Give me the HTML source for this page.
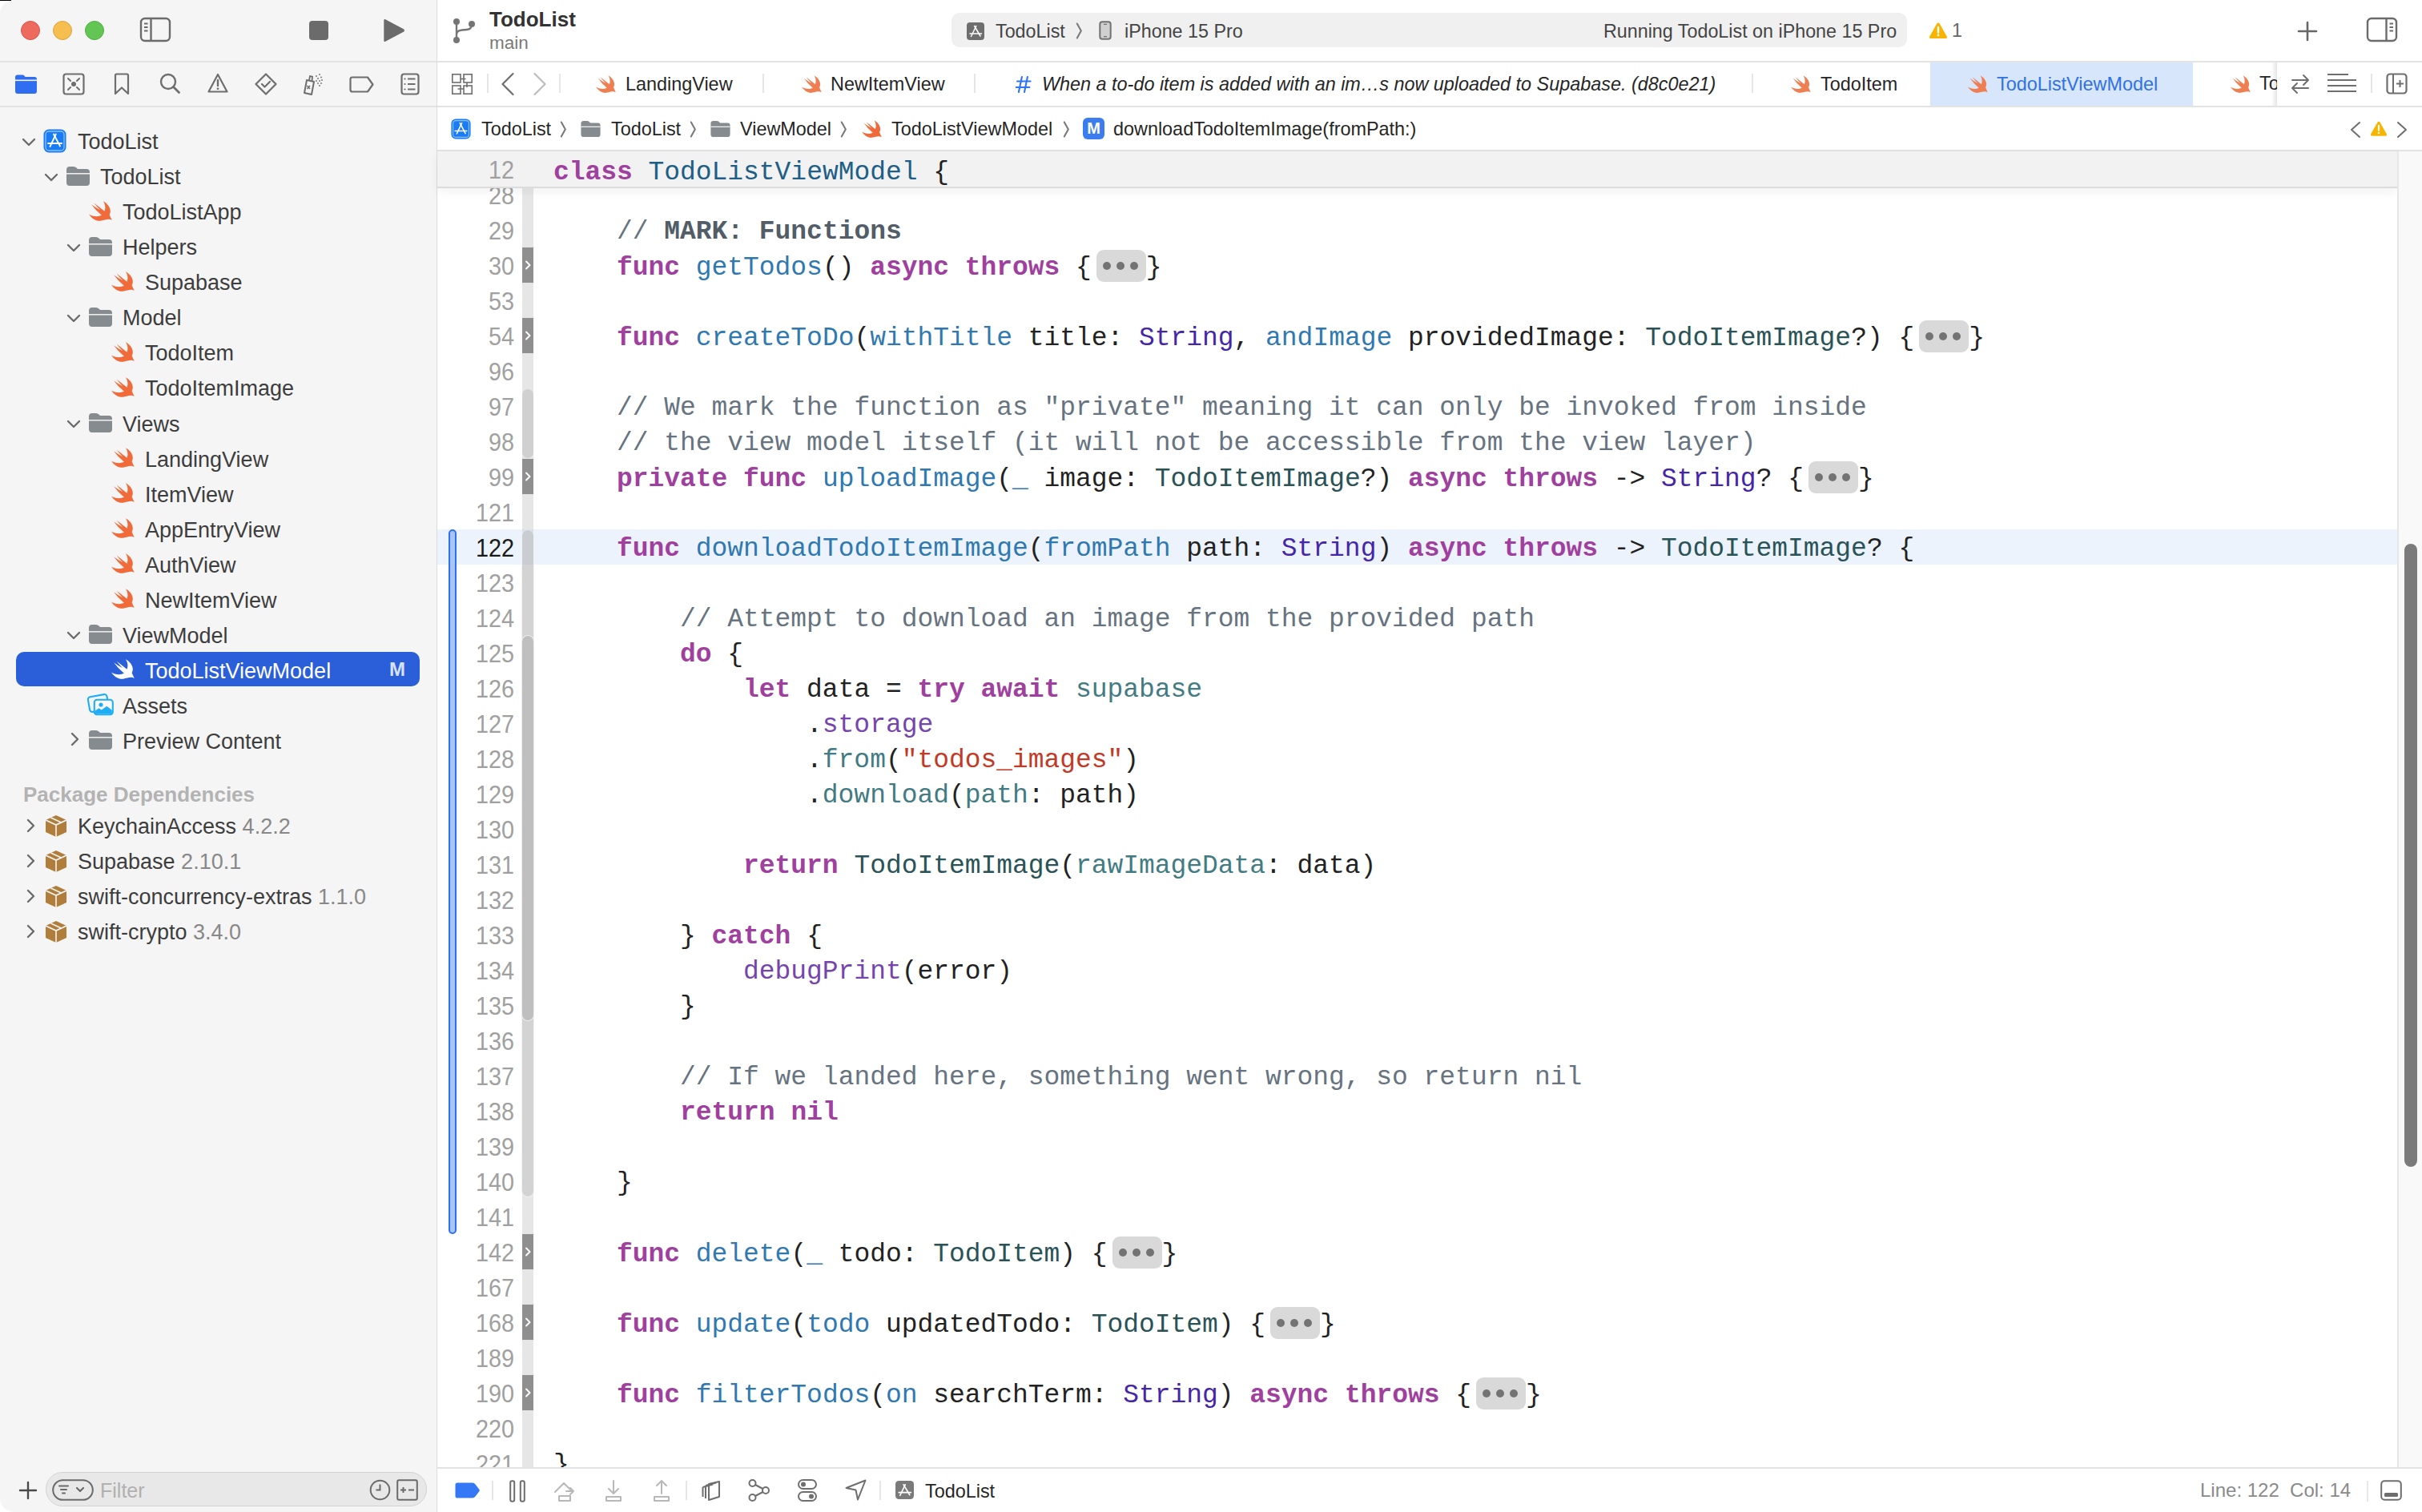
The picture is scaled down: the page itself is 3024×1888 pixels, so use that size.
<!DOCTYPE html><html><head><meta charset="utf-8"><style>
html,body{margin:0;padding:0;background:#fff;}
body{width:3024px;height:1888px;overflow:hidden;position:relative;}
#win{position:absolute;left:0;top:0;width:3024px;height:1888px;border-radius:17px;overflow:hidden;background:#fff;}
.a{position:absolute;}
</style></head><body><div id="win">
<div class="a" style="left:0;top:0;width:545px;height:1888px;background:#f5f5f5;"></div>
<div class="a" style="left:545px;top:0;width:1px;height:1888px;background:#dcdcdc;"></div>
<div class="a" style="left:0;top:76px;width:3024px;height:2px;background:#e3e3e3;"></div>
<div class="a" style="left:0;top:132px;width:545px;height:2px;background:#e3e3e3;"></div>
<div class="a" style="left:26px;top:26px;width:22px;height:22px;border-radius:50%;background:#ee6a5f;border:1px solid #d9534a;"></div>
<div class="a" style="left:66px;top:26px;width:22px;height:22px;border-radius:50%;background:#f5be4f;border:1px solid #dca23c;"></div>
<div class="a" style="left:106px;top:26px;width:22px;height:22px;border-radius:50%;background:#62c554;border:1px solid #4fae43;"></div>
<svg class="a" style="left:174px;top:21px" width="40" height="32" viewBox="0 0 40 32"><rect x="2" y="2" width="36" height="28" rx="5" fill="none" stroke="#6b6b6b" stroke-width="2.4"/><path d="M14.5 2 V30" stroke="#6b6b6b" stroke-width="2.4"/><path d="M6 8.5 H10.5 M6 13 H10.5 M6 17.5 H10.5" stroke="#6b6b6b" stroke-width="1.8"/></svg>
<div class="a" style="left:386px;top:26px;width:24px;height:24px;border-radius:4px;background:#6b6b6b;"></div>
<svg class="a" style="left:477px;top:22px" width="30" height="32" viewBox="0 0 30 32"><path d="M2.3 3.4 Q2.3 1.2 4.3 2.2 L27.3 14.6 Q28.8 16 27.3 17.4 L4.3 29.8 Q2.3 30.8 2.3 28.6 Z" fill="#6b6b6b"/></svg>
<svg class="a" style="left:19px;top:93px" width="27" height="24" viewBox="0 0 27 24"><path fill="#2f6ef0" d="M0 3.5 Q0 0.5 3 0.5 H9 Q10.5 0.5 11.5 1.8 L12.5 3 H24 Q27 3 27 6 V21 Q27 24 24 24 H3 Q0 24 0 21 Z"/><rect x="0" y="6.5" width="27" height="1.6" fill="#f5f5f5"/></svg>
<svg class="a" style="left:78px;top:91px" width="28" height="28" viewBox="0 0 28 28"><rect x="1.5" y="1.5" width="25" height="25" rx="3" fill="none" stroke="#6e6e6e" stroke-width="2.2"/><circle cx="14" cy="14" r="3" fill="#6e6e6e"/><path d="M7 7 L10 10 M21 7 L18 10 M7 21 L10 18 M21 21 L18 18" stroke="#6e6e6e" stroke-width="2" stroke-linecap="round"/></svg>
<svg class="a" style="left:142px;top:91px" width="20" height="28" viewBox="0 0 20 28"><path d="M2 3 Q2 1.5 3.5 1.5 H16.5 Q18 1.5 18 3 V26 L10 18.5 L2 26 Z" fill="none" stroke="#6e6e6e" stroke-width="2.2" stroke-linejoin="round"/></svg>
<svg class="a" style="left:199px;top:91px" width="27" height="27" viewBox="0 0 27 27"><circle cx="11" cy="11" r="9" fill="none" stroke="#6e6e6e" stroke-width="2.4"/><path d="M17.5 17.5 L24.5 24.5" stroke="#6e6e6e" stroke-width="2.8" stroke-linecap="round"/></svg>
<svg class="a" style="left:259px;top:91px" width="26" height="26" viewBox="0 0 26 26"><path d="M13 2 L24.5 23.5 H1.5 Z" fill="none" stroke="#6e6e6e" stroke-width="2.2" stroke-linejoin="round"/><path d="M13 9 V16" stroke="#6e6e6e" stroke-width="2.4" stroke-linecap="round"/><circle cx="13" cy="19.8" r="1.4" fill="#6e6e6e"/></svg>
<svg class="a" style="left:318px;top:91px" width="28" height="28" viewBox="0 0 28 28"><path d="M14 1.5 L26.5 14 L14 26.5 L1.5 14 Z" fill="none" stroke="#6e6e6e" stroke-width="2.2" stroke-linejoin="round"/><path d="M9 14 L12.5 17.5 L19 11" fill="none" stroke="#6e6e6e" stroke-width="2.2" stroke-linecap="round" stroke-linejoin="round"/></svg>
<svg class="a" style="left:377px;top:91px" width="31" height="28" viewBox="0 0 31 28"><path d="M6 9 L15 11 L12 27 L3 25 Z" fill="none" stroke="#6e6e6e" stroke-width="2" stroke-linejoin="round"/><path d="M9 9.5 L10 4 L13 4.7 L12.5 10.3" fill="none" stroke="#6e6e6e" stroke-width="1.8"/><path d="M6.5 16 L10 20 M10 16 L6.5 20" stroke="#6e6e6e" stroke-width="1.6"/><g fill="#6e6e6e"><circle cx="18" cy="4" r="0.9"/><circle cx="22" cy="2" r="0.9"/><circle cx="20" cy="7" r="0.9"/><circle cx="24" cy="5.5" r="0.9"/><circle cx="18" cy="10" r="0.9"/><circle cx="22" cy="10" r="0.9"/><circle cx="25" cy="9" r="0.9"/><circle cx="20" cy="13" r="0.9"/><circle cx="24" cy="13" r="0.9"/><circle cx="22" cy="16" r="0.9"/></g></svg>
<svg class="a" style="left:436px;top:95px" width="31" height="21" viewBox="0 0 31 21"><path d="M4 1.5 H23 L29.5 10.5 L23 19.5 H4 Q1.5 19.5 1.5 17 V4 Q1.5 1.5 4 1.5 Z" fill="none" stroke="#6e6e6e" stroke-width="2.2" stroke-linejoin="round"/></svg>
<svg class="a" style="left:500px;top:91px" width="24" height="28" viewBox="0 0 24 28"><rect x="1.5" y="1.5" width="21" height="25" rx="3" fill="none" stroke="#6e6e6e" stroke-width="2.2"/><path d="M9 7.5 H18.5 M9 14 H18.5 M9 20.5 H18.5" stroke="#6e6e6e" stroke-width="2"/><circle cx="5.5" cy="7.5" r="1.1" fill="#6e6e6e"/><circle cx="5.5" cy="14" r="1.1" fill="#6e6e6e"/><circle cx="5.5" cy="20.5" r="1.1" fill="#6e6e6e"/></svg>
<svg style="position:absolute;left:27px;top:171px" width="18" height="13" viewBox="-9 -6.5 18 13"><path d="M-7 -3.5 L0 3.5 L7 -3.5" fill="none" stroke="#6b6b6b" stroke-width="2.4" stroke-linecap="round" stroke-linejoin="round"/></svg>
<svg style="position:absolute;left:54px;top:161px" width="29" height="30" viewBox="0 0 29 30"><rect x="0.5" y="0.5" width="28" height="29" rx="6.5" fill="#1a7cf5"/><rect x="3" y="3" width="23" height="24" rx="4" fill="none" stroke="#8cc0ff" stroke-width="1.3"/><g stroke="#fff" stroke-width="1.8" stroke-linecap="round" fill="none"><path d="M15.8 6.5 L8.5 22"/><path d="M13 6.5 L21 21.5"/><path d="M6 18 L23 18"/></g></svg>
<div style="position:absolute;left:97px;top:160.4px;font:normal normal 27px/35.1px 'Liberation Sans', sans-serif;color:#3d3d3d;white-space:pre;">TodoList</div>
<svg style="position:absolute;left:55px;top:215px" width="18" height="13" viewBox="-9 -6.5 18 13"><path d="M-7 -3.5 L0 3.5 L7 -3.5" fill="none" stroke="#6b6b6b" stroke-width="2.4" stroke-linecap="round" stroke-linejoin="round"/></svg>
<svg style="position:absolute;left:83px;top:208px" width="29" height="24" viewBox="0 0 29 24"><path fill="#868b90" d="M0 4 Q0 0 4 0 H9 Q11 0 12.5 1.5 L14 3 H25 Q29 3 29 7 V20 Q29 24 25 24 H4 Q0 24 0 20 Z"/><rect x="0" y="8" width="29" height="1.6" fill="#f5f5f5" opacity="0.9"/></svg>
<div style="position:absolute;left:125px;top:204.4px;font:normal normal 27px/35.1px 'Liberation Sans', sans-serif;color:#3d3d3d;white-space:pre;">TodoList</div>
<svg style="position:absolute;left:111px;top:251px" width="29" height="25" viewBox="0 0 28.5 25.2" preserveAspectRatio="none"><path fill="#f06a3a" d="M17.5 0.3 C23 3.2 27.2 9 26.2 14.4 L25.2 17.4 L28.2 24.3 C24.5 21.8 20.5 23.6 14.5 25 C8.5 25.6 3.2 21.5 0 16.6 C4.5 19.6 11 20.4 15.6 18 Q8 11.5 3.05 4.3 Q8.5 8.5 13.9 11.4 Q9.5 7 6.5 2.6 Q13 8 19.2 12.8 C20.8 8.8 20.2 4 17.5 0.3 Z"/></svg>
<div style="position:absolute;left:153px;top:248.4px;font:normal normal 27px/35.1px 'Liberation Sans', sans-serif;color:#3d3d3d;white-space:pre;">TodoListApp</div>
<svg style="position:absolute;left:83px;top:303px" width="18" height="13" viewBox="-9 -6.5 18 13"><path d="M-7 -3.5 L0 3.5 L7 -3.5" fill="none" stroke="#6b6b6b" stroke-width="2.4" stroke-linecap="round" stroke-linejoin="round"/></svg>
<svg style="position:absolute;left:111px;top:296px" width="29" height="24" viewBox="0 0 29 24"><path fill="#868b90" d="M0 4 Q0 0 4 0 H9 Q11 0 12.5 1.5 L14 3 H25 Q29 3 29 7 V20 Q29 24 25 24 H4 Q0 24 0 20 Z"/><rect x="0" y="8" width="29" height="1.6" fill="#f5f5f5" opacity="0.9"/></svg>
<div style="position:absolute;left:153px;top:292.4px;font:normal normal 27px/35.1px 'Liberation Sans', sans-serif;color:#3d3d3d;white-space:pre;">Helpers</div>
<svg style="position:absolute;left:139px;top:339px" width="29" height="25" viewBox="0 0 28.5 25.2" preserveAspectRatio="none"><path fill="#f06a3a" d="M17.5 0.3 C23 3.2 27.2 9 26.2 14.4 L25.2 17.4 L28.2 24.3 C24.5 21.8 20.5 23.6 14.5 25 C8.5 25.6 3.2 21.5 0 16.6 C4.5 19.6 11 20.4 15.6 18 Q8 11.5 3.05 4.3 Q8.5 8.5 13.9 11.4 Q9.5 7 6.5 2.6 Q13 8 19.2 12.8 C20.8 8.8 20.2 4 17.5 0.3 Z"/></svg>
<div style="position:absolute;left:181px;top:336.4px;font:normal normal 27px/35.1px 'Liberation Sans', sans-serif;color:#3d3d3d;white-space:pre;">Supabase</div>
<svg style="position:absolute;left:83px;top:391px" width="18" height="13" viewBox="-9 -6.5 18 13"><path d="M-7 -3.5 L0 3.5 L7 -3.5" fill="none" stroke="#6b6b6b" stroke-width="2.4" stroke-linecap="round" stroke-linejoin="round"/></svg>
<svg style="position:absolute;left:111px;top:384px" width="29" height="24" viewBox="0 0 29 24"><path fill="#868b90" d="M0 4 Q0 0 4 0 H9 Q11 0 12.5 1.5 L14 3 H25 Q29 3 29 7 V20 Q29 24 25 24 H4 Q0 24 0 20 Z"/><rect x="0" y="8" width="29" height="1.6" fill="#f5f5f5" opacity="0.9"/></svg>
<div style="position:absolute;left:153px;top:380.4px;font:normal normal 27px/35.1px 'Liberation Sans', sans-serif;color:#3d3d3d;white-space:pre;">Model</div>
<svg style="position:absolute;left:139px;top:427px" width="29" height="25" viewBox="0 0 28.5 25.2" preserveAspectRatio="none"><path fill="#f06a3a" d="M17.5 0.3 C23 3.2 27.2 9 26.2 14.4 L25.2 17.4 L28.2 24.3 C24.5 21.8 20.5 23.6 14.5 25 C8.5 25.6 3.2 21.5 0 16.6 C4.5 19.6 11 20.4 15.6 18 Q8 11.5 3.05 4.3 Q8.5 8.5 13.9 11.4 Q9.5 7 6.5 2.6 Q13 8 19.2 12.8 C20.8 8.8 20.2 4 17.5 0.3 Z"/></svg>
<div style="position:absolute;left:181px;top:424.4px;font:normal normal 27px/35.1px 'Liberation Sans', sans-serif;color:#3d3d3d;white-space:pre;">TodoItem</div>
<svg style="position:absolute;left:139px;top:471px" width="29" height="25" viewBox="0 0 28.5 25.2" preserveAspectRatio="none"><path fill="#f06a3a" d="M17.5 0.3 C23 3.2 27.2 9 26.2 14.4 L25.2 17.4 L28.2 24.3 C24.5 21.8 20.5 23.6 14.5 25 C8.5 25.6 3.2 21.5 0 16.6 C4.5 19.6 11 20.4 15.6 18 Q8 11.5 3.05 4.3 Q8.5 8.5 13.9 11.4 Q9.5 7 6.5 2.6 Q13 8 19.2 12.8 C20.8 8.8 20.2 4 17.5 0.3 Z"/></svg>
<div style="position:absolute;left:181px;top:468.4px;font:normal normal 27px/35.1px 'Liberation Sans', sans-serif;color:#3d3d3d;white-space:pre;">TodoItemImage</div>
<svg style="position:absolute;left:83px;top:523px" width="18" height="13" viewBox="-9 -6.5 18 13"><path d="M-7 -3.5 L0 3.5 L7 -3.5" fill="none" stroke="#6b6b6b" stroke-width="2.4" stroke-linecap="round" stroke-linejoin="round"/></svg>
<svg style="position:absolute;left:111px;top:516px" width="29" height="24" viewBox="0 0 29 24"><path fill="#868b90" d="M0 4 Q0 0 4 0 H9 Q11 0 12.5 1.5 L14 3 H25 Q29 3 29 7 V20 Q29 24 25 24 H4 Q0 24 0 20 Z"/><rect x="0" y="8" width="29" height="1.6" fill="#f5f5f5" opacity="0.9"/></svg>
<div style="position:absolute;left:153px;top:512.5px;font:normal normal 27px/35.1px 'Liberation Sans', sans-serif;color:#3d3d3d;white-space:pre;">Views</div>
<svg style="position:absolute;left:139px;top:559px" width="29" height="25" viewBox="0 0 28.5 25.2" preserveAspectRatio="none"><path fill="#f06a3a" d="M17.5 0.3 C23 3.2 27.2 9 26.2 14.4 L25.2 17.4 L28.2 24.3 C24.5 21.8 20.5 23.6 14.5 25 C8.5 25.6 3.2 21.5 0 16.6 C4.5 19.6 11 20.4 15.6 18 Q8 11.5 3.05 4.3 Q8.5 8.5 13.9 11.4 Q9.5 7 6.5 2.6 Q13 8 19.2 12.8 C20.8 8.8 20.2 4 17.5 0.3 Z"/></svg>
<div style="position:absolute;left:181px;top:556.5px;font:normal normal 27px/35.1px 'Liberation Sans', sans-serif;color:#3d3d3d;white-space:pre;">LandingView</div>
<svg style="position:absolute;left:139px;top:603px" width="29" height="25" viewBox="0 0 28.5 25.2" preserveAspectRatio="none"><path fill="#f06a3a" d="M17.5 0.3 C23 3.2 27.2 9 26.2 14.4 L25.2 17.4 L28.2 24.3 C24.5 21.8 20.5 23.6 14.5 25 C8.5 25.6 3.2 21.5 0 16.6 C4.5 19.6 11 20.4 15.6 18 Q8 11.5 3.05 4.3 Q8.5 8.5 13.9 11.4 Q9.5 7 6.5 2.6 Q13 8 19.2 12.8 C20.8 8.8 20.2 4 17.5 0.3 Z"/></svg>
<div style="position:absolute;left:181px;top:600.5px;font:normal normal 27px/35.1px 'Liberation Sans', sans-serif;color:#3d3d3d;white-space:pre;">ItemView</div>
<svg style="position:absolute;left:139px;top:647px" width="29" height="25" viewBox="0 0 28.5 25.2" preserveAspectRatio="none"><path fill="#f06a3a" d="M17.5 0.3 C23 3.2 27.2 9 26.2 14.4 L25.2 17.4 L28.2 24.3 C24.5 21.8 20.5 23.6 14.5 25 C8.5 25.6 3.2 21.5 0 16.6 C4.5 19.6 11 20.4 15.6 18 Q8 11.5 3.05 4.3 Q8.5 8.5 13.9 11.4 Q9.5 7 6.5 2.6 Q13 8 19.2 12.8 C20.8 8.8 20.2 4 17.5 0.3 Z"/></svg>
<div style="position:absolute;left:181px;top:644.5px;font:normal normal 27px/35.1px 'Liberation Sans', sans-serif;color:#3d3d3d;white-space:pre;">AppEntryView</div>
<svg style="position:absolute;left:139px;top:691px" width="29" height="25" viewBox="0 0 28.5 25.2" preserveAspectRatio="none"><path fill="#f06a3a" d="M17.5 0.3 C23 3.2 27.2 9 26.2 14.4 L25.2 17.4 L28.2 24.3 C24.5 21.8 20.5 23.6 14.5 25 C8.5 25.6 3.2 21.5 0 16.6 C4.5 19.6 11 20.4 15.6 18 Q8 11.5 3.05 4.3 Q8.5 8.5 13.9 11.4 Q9.5 7 6.5 2.6 Q13 8 19.2 12.8 C20.8 8.8 20.2 4 17.5 0.3 Z"/></svg>
<div style="position:absolute;left:181px;top:688.5px;font:normal normal 27px/35.1px 'Liberation Sans', sans-serif;color:#3d3d3d;white-space:pre;">AuthView</div>
<svg style="position:absolute;left:139px;top:735px" width="29" height="25" viewBox="0 0 28.5 25.2" preserveAspectRatio="none"><path fill="#f06a3a" d="M17.5 0.3 C23 3.2 27.2 9 26.2 14.4 L25.2 17.4 L28.2 24.3 C24.5 21.8 20.5 23.6 14.5 25 C8.5 25.6 3.2 21.5 0 16.6 C4.5 19.6 11 20.4 15.6 18 Q8 11.5 3.05 4.3 Q8.5 8.5 13.9 11.4 Q9.5 7 6.5 2.6 Q13 8 19.2 12.8 C20.8 8.8 20.2 4 17.5 0.3 Z"/></svg>
<div style="position:absolute;left:181px;top:732.5px;font:normal normal 27px/35.1px 'Liberation Sans', sans-serif;color:#3d3d3d;white-space:pre;">NewItemView</div>
<svg style="position:absolute;left:83px;top:787px" width="18" height="13" viewBox="-9 -6.5 18 13"><path d="M-7 -3.5 L0 3.5 L7 -3.5" fill="none" stroke="#6b6b6b" stroke-width="2.4" stroke-linecap="round" stroke-linejoin="round"/></svg>
<svg style="position:absolute;left:111px;top:780px" width="29" height="24" viewBox="0 0 29 24"><path fill="#868b90" d="M0 4 Q0 0 4 0 H9 Q11 0 12.5 1.5 L14 3 H25 Q29 3 29 7 V20 Q29 24 25 24 H4 Q0 24 0 20 Z"/><rect x="0" y="8" width="29" height="1.6" fill="#f5f5f5" opacity="0.9"/></svg>
<div style="position:absolute;left:153px;top:776.5px;font:normal normal 27px/35.1px 'Liberation Sans', sans-serif;color:#3d3d3d;white-space:pre;">ViewModel</div>
<div class="a" style="left:20px;top:814px;width:504px;height:43px;border-radius:10px;background:#2b5fd9;"></div>
<svg style="position:absolute;left:139px;top:823px" width="29" height="25" viewBox="0 0 28.5 25.2" preserveAspectRatio="none"><path fill="#ffffff" d="M17.5 0.3 C23 3.2 27.2 9 26.2 14.4 L25.2 17.4 L28.2 24.3 C24.5 21.8 20.5 23.6 14.5 25 C8.5 25.6 3.2 21.5 0 16.6 C4.5 19.6 11 20.4 15.6 18 Q8 11.5 3.05 4.3 Q8.5 8.5 13.9 11.4 Q9.5 7 6.5 2.6 Q13 8 19.2 12.8 C20.8 8.8 20.2 4 17.5 0.3 Z"/></svg>
<div style="position:absolute;left:181px;top:820.5px;font:normal normal 27px/35.1px 'Liberation Sans', sans-serif;color:#ffffff;white-space:pre;">TodoListViewModel</div>
<div style="position:absolute;left:486px;top:820.4px;font:normal bold 24px/31.2px 'Liberation Sans', sans-serif;color:#d7e2fa;white-space:pre;">M</div>
<svg class="a" style="left:105px;top:862px" width="40" height="34" viewBox="105 862 40 34"><rect x="110.8" y="868.5" width="24" height="19" rx="3.2" fill="none" stroke="#1eaef4" stroke-width="2.1" transform="rotate(-10 122.8 878)"/><rect x="117.8" y="873.8" width="23" height="18.4" rx="3.2" fill="#fbfbfb" stroke="#1eaef4" stroke-width="2.1"/><path d="M118.8 887.5 L123.5 884.3 L126.7 886.6 L133.3 881.8 L139.8 886.8 V891.2 H118.8 Z" fill="#1eaef4"/><circle cx="126" cy="880" r="2.6" fill="#1eaef4"/></svg>
<div style="position:absolute;left:153px;top:864.5px;font:normal normal 27px/35.1px 'Liberation Sans', sans-serif;color:#3d3d3d;white-space:pre;">Assets</div>
<svg style="position:absolute;left:87px;top:914px" width="13" height="18" viewBox="-6.5 -9 13 18"><path d="M-3.5 -7 L3.5 0 L-3.5 7" fill="none" stroke="#6b6b6b" stroke-width="2.4" stroke-linecap="round" stroke-linejoin="round"/></svg>
<svg style="position:absolute;left:111px;top:912px" width="29" height="24" viewBox="0 0 29 24"><path fill="#868b90" d="M0 4 Q0 0 4 0 H9 Q11 0 12.5 1.5 L14 3 H25 Q29 3 29 7 V20 Q29 24 25 24 H4 Q0 24 0 20 Z"/><rect x="0" y="8" width="29" height="1.6" fill="#f5f5f5" opacity="0.9"/></svg>
<div style="position:absolute;left:153px;top:908.5px;font:normal normal 27px/35.1px 'Liberation Sans', sans-serif;color:#3d3d3d;white-space:pre;">Preview Content</div>
<div style="position:absolute;left:29px;top:976.1px;font:normal bold 26px/33.8px 'Liberation Sans', sans-serif;color:#b3b3b3;white-space:pre;">Package Dependencies</div>
<svg style="position:absolute;left:32px;top:1022px" width="13" height="18" viewBox="-6.5 -9 13 18"><path d="M-3.5 -7 L3.5 0 L-3.5 7" fill="none" stroke="#6b6b6b" stroke-width="2.4" stroke-linecap="round" stroke-linejoin="round"/></svg>
<svg style="position:absolute;left:57px;top:1018px" width="26" height="27" viewBox="0 0 26 27"><path fill="#b07d3b" d="M13 0 L26 6 V21 L13 27 L0 21 V6 Z"/><path d="M0 6 L13 12 L26 6 M13 12 V27" stroke="#f5f5f5" stroke-width="1.6" fill="none"/><path d="M6.5 3 L19.5 9" stroke="#f5f5f5" stroke-width="1.6" fill="none"/></svg>
<div class="a" style="left:97px;top:1014.5px;font:normal 27px/35px 'Liberation Sans', sans-serif;white-space:pre;color:#3d3d3d">KeychainAccess <span style="color:#888">4.2.2</span></div>
<svg style="position:absolute;left:32px;top:1066px" width="13" height="18" viewBox="-6.5 -9 13 18"><path d="M-3.5 -7 L3.5 0 L-3.5 7" fill="none" stroke="#6b6b6b" stroke-width="2.4" stroke-linecap="round" stroke-linejoin="round"/></svg>
<svg style="position:absolute;left:57px;top:1062px" width="26" height="27" viewBox="0 0 26 27"><path fill="#b07d3b" d="M13 0 L26 6 V21 L13 27 L0 21 V6 Z"/><path d="M0 6 L13 12 L26 6 M13 12 V27" stroke="#f5f5f5" stroke-width="1.6" fill="none"/><path d="M6.5 3 L19.5 9" stroke="#f5f5f5" stroke-width="1.6" fill="none"/></svg>
<div class="a" style="left:97px;top:1058.5px;font:normal 27px/35px 'Liberation Sans', sans-serif;white-space:pre;color:#3d3d3d">Supabase <span style="color:#888">2.10.1</span></div>
<svg style="position:absolute;left:32px;top:1110px" width="13" height="18" viewBox="-6.5 -9 13 18"><path d="M-3.5 -7 L3.5 0 L-3.5 7" fill="none" stroke="#6b6b6b" stroke-width="2.4" stroke-linecap="round" stroke-linejoin="round"/></svg>
<svg style="position:absolute;left:57px;top:1106px" width="26" height="27" viewBox="0 0 26 27"><path fill="#b07d3b" d="M13 0 L26 6 V21 L13 27 L0 21 V6 Z"/><path d="M0 6 L13 12 L26 6 M13 12 V27" stroke="#f5f5f5" stroke-width="1.6" fill="none"/><path d="M6.5 3 L19.5 9" stroke="#f5f5f5" stroke-width="1.6" fill="none"/></svg>
<div class="a" style="left:97px;top:1102.5px;font:normal 27px/35px 'Liberation Sans', sans-serif;white-space:pre;color:#3d3d3d">swift-concurrency-extras <span style="color:#888">1.1.0</span></div>
<svg style="position:absolute;left:32px;top:1154px" width="13" height="18" viewBox="-6.5 -9 13 18"><path d="M-3.5 -7 L3.5 0 L-3.5 7" fill="none" stroke="#6b6b6b" stroke-width="2.4" stroke-linecap="round" stroke-linejoin="round"/></svg>
<svg style="position:absolute;left:57px;top:1150px" width="26" height="27" viewBox="0 0 26 27"><path fill="#b07d3b" d="M13 0 L26 6 V21 L13 27 L0 21 V6 Z"/><path d="M0 6 L13 12 L26 6 M13 12 V27" stroke="#f5f5f5" stroke-width="1.6" fill="none"/><path d="M6.5 3 L19.5 9" stroke="#f5f5f5" stroke-width="1.6" fill="none"/></svg>
<div class="a" style="left:97px;top:1146.5px;font:normal 27px/35px 'Liberation Sans', sans-serif;white-space:pre;color:#3d3d3d">swift-crypto <span style="color:#888">3.4.0</span></div>
<svg class="a" style="left:22px;top:1848px" width="26" height="26" viewBox="0 0 26 26"><path d="M13 3 V23 M3 13 H23" stroke="#4a4a4a" stroke-width="2.4" stroke-linecap="round"/></svg>
<div class="a" style="left:57px;top:1838px;width:474px;height:41px;border-radius:21px;background:#e8e8e8;border:1px solid #d3d3d3;"></div>
<svg class="a" style="left:65px;top:1847px" width="52" height="27" viewBox="0 0 52 27"><rect x="1.2" y="1.2" width="49.6" height="24.6" rx="12.3" fill="none" stroke="#6a6a6a" stroke-width="2"/><path d="M9 8.5 H20 M11 13 H18 M13 17.5 H16" stroke="#6a6a6a" stroke-width="2" stroke-linecap="round"/><path d="M31 11 L35 15 L39 11" fill="none" stroke="#6a6a6a" stroke-width="2.2" stroke-linecap="round" stroke-linejoin="round"/></svg>
<div style="position:absolute;left:125px;top:1844.8px;font:normal normal 25px/32.5px 'Liberation Sans', sans-serif;color:#b0b0b0;white-space:pre;">Filter</div>
<svg class="a" style="left:461px;top:1847px" width="27" height="27" viewBox="0 0 27 27"><circle cx="13.5" cy="13.5" r="11.8" fill="none" stroke="#6a6a6a" stroke-width="2"/><path d="M13.5 6.5 V13.5 H8.5" fill="none" stroke="#6a6a6a" stroke-width="2"/></svg>
<svg class="a" style="left:495px;top:1847px" width="27" height="27" viewBox="0 0 27 27"><rect x="1.2" y="1.2" width="24.6" height="24.6" rx="2" fill="none" stroke="#6a6a6a" stroke-width="2"/><path d="M5 13.5 H12 M8.5 10 V17 M15 13.5 H22" stroke="#6a6a6a" stroke-width="2"/></svg>
<div class="a" style="left:546px;top:0;width:2478px;height:76px;background:#ffffff;"></div>
<svg class="a" style="left:564px;top:22px" width="31" height="33" viewBox="0 0 31 33"><g fill="#757575"><circle cx="6" cy="5" r="4"/><circle cx="25" cy="8" r="4"/><circle cx="6" cy="28" r="4"/></g><path d="M6 5 V28 M6 21 Q6 16 13 15.5 L19 15 Q25 14.5 25 8" fill="none" stroke="#757575" stroke-width="2.4"/></svg>
<div style="position:absolute;left:611px;top:7.6px;font:normal bold 26px/33.8px 'Liberation Sans', sans-serif;color:#333333;white-space:pre;">TodoList</div>
<div style="position:absolute;left:611px;top:38.9px;font:normal normal 22.5px/29.2px 'Liberation Sans', sans-serif;color:#7a7a7a;white-space:pre;">main</div>
<div class="a" style="left:1188px;top:16px;width:1193px;height:43px;border-radius:10px;background:#f0f0f0;"></div>
<svg class="a" style="left:1207px;top:28px" width="22" height="22" viewBox="0 0 22 22"><rect x="0" y="0" width="22" height="22" rx="4" fill="#6e6e6e"/><g stroke="#fff" stroke-width="1.5" stroke-linecap="round" fill="none"><path d="M11.8 4.5 L5.5 17.5"/><path d="M9.6 4.5 L17 17"/><path d="M4 14 H18.5"/></g></svg>
<div style="position:absolute;left:1243px;top:23.9px;font:normal normal 23.3px/30.3px 'Liberation Sans', sans-serif;color:#444;white-space:pre;">TodoList</div>
<svg class="a" style="left:1343px;top:27px" width="9" height="23" viewBox="0 0 9 23"><path d="M1.8 2.5 L6.8 11.5 L1.8 20.5" fill="none" stroke="#7a7a7a" stroke-width="2.1" stroke-linecap="round" stroke-linejoin="round"/></svg>
<svg class="a" style="left:1372px;top:26px" width="16" height="24" viewBox="0 0 16 24"><rect x="1.3" y="1.3" width="13.4" height="21.4" rx="3" fill="#d0d0d0" stroke="#727272" stroke-width="2"/><path d="M6 4.3 H10 M6 19.7 H10" stroke="#727272" stroke-width="1.3"/></svg>
<div style="position:absolute;left:1404px;top:23.9px;font:normal normal 23.3px/30.3px 'Liberation Sans', sans-serif;color:#444;white-space:pre;">iPhone 15 Pro</div>
<div style="position:absolute;left:2002px;top:23.9px;font:normal normal 23.3px/30.3px 'Liberation Sans', sans-serif;color:#444;white-space:pre;">Running TodoList on iPhone 15 Pro</div>
<svg class="a" style="left:2408px;top:27px" width="24" height="22" viewBox="0 0 24 22"><path d="M12 1.5 Q13 1.5 13.7 2.6 L23 19 Q23.5 21 21.5 21 H2.5 Q0.5 21 1 19 L10.3 2.6 Q11 1.5 12 1.5 Z" fill="#f7b500"/><path d="M12 7 V13.5" stroke="#fff" stroke-width="2.4" stroke-linecap="round"/><circle cx="12" cy="17" r="1.4" fill="#fff"/></svg>
<div style="position:absolute;left:2437px;top:22.9px;font:normal normal 23.3px/30.3px 'Liberation Sans', sans-serif;color:#666;white-space:pre;">1</div>
<svg class="a" style="left:2868px;top:26px" width="26" height="26" viewBox="0 0 26 26"><path d="M13 2 V24 M2 13 H24" stroke="#666" stroke-width="2.6" stroke-linecap="round"/></svg>
<svg class="a" style="left:2954px;top:21px" width="40" height="32" viewBox="0 0 40 32"><rect x="2" y="2" width="36" height="28" rx="5" fill="none" stroke="#6b6b6b" stroke-width="2.4"/><path d="M25.5 2 V30" stroke="#6b6b6b" stroke-width="2.4"/><path d="M29.5 8.5 H34 M29.5 13 H34 M29.5 17.5 H34" stroke="#6b6b6b" stroke-width="1.8"/></svg>
<div class="a" style="left:546px;top:78px;width:2478px;height:54px;background:#ffffff;"></div>
<div class="a" style="left:546px;top:132px;width:2478px;height:2px;background:#e3e3e3;"></div>
<svg class="a" style="left:564px;top:92px" width="26" height="26" viewBox="0 0 26 26"><g fill="none" stroke="#6e6e6e" stroke-width="1.6"><rect x="0.8" y="0.8" width="10.2" height="10.2"/><rect x="15" y="0.8" width="10.2" height="10.2"/><rect x="0.8" y="15" width="10.2" height="10.2"/><rect x="15" y="15" width="10.2" height="10.2"/><path d="M11 6.5 H17.5 M19 11 V17 M7.5 19 H15"/></g></svg>
<div class="a" style="left:608px;top:92px;width:2px;height:24px;background:#e6e6e6"></div>

<svg class="a" style="left:624px;top:89px" width="20" height="32" viewBox="0 0 20 32"><path d="M16.5 3 L3.5 16 L16.5 29" fill="none" stroke="#6e6e6e" stroke-width="2.2" stroke-linecap="round" stroke-linejoin="round"/></svg>
<svg class="a" style="left:664px;top:89px" width="20" height="32" viewBox="0 0 20 32"><path d="M3.5 3 L16.5 16 L3.5 29" fill="none" stroke="#bdbdbd" stroke-width="2.2" stroke-linecap="round" stroke-linejoin="round"/></svg>
<div class="a" style="left:698px;top:92px;width:2px;height:24px;background:#e6e6e6"></div>
<svg style="position:absolute;left:744px;top:94px" width="25" height="22" viewBox="0 0 28.5 25.2" preserveAspectRatio="none"><path fill="#ef7e52" d="M17.5 0.3 C23 3.2 27.2 9 26.2 14.4 L25.2 17.4 L28.2 24.3 C24.5 21.8 20.5 23.6 14.5 25 C8.5 25.6 3.2 21.5 0 16.6 C4.5 19.6 11 20.4 15.6 18 Q8 11.5 3.05 4.3 Q8.5 8.5 13.9 11.4 Q9.5 7 6.5 2.6 Q13 8 19.2 12.8 C20.8 8.8 20.2 4 17.5 0.3 Z"/></svg>
<div style="position:absolute;left:781px;top:89.8px;font:normal normal 23.4px/30.4px 'Liberation Sans', sans-serif;color:#262626;white-space:pre;">LandingView</div>
<div class="a" style="left:952px;top:92px;width:2px;height:24px;background:#e6e6e6"></div>
<svg style="position:absolute;left:1001px;top:94px" width="25" height="22" viewBox="0 0 28.5 25.2" preserveAspectRatio="none"><path fill="#ef7e52" d="M17.5 0.3 C23 3.2 27.2 9 26.2 14.4 L25.2 17.4 L28.2 24.3 C24.5 21.8 20.5 23.6 14.5 25 C8.5 25.6 3.2 21.5 0 16.6 C4.5 19.6 11 20.4 15.6 18 Q8 11.5 3.05 4.3 Q8.5 8.5 13.9 11.4 Q9.5 7 6.5 2.6 Q13 8 19.2 12.8 C20.8 8.8 20.2 4 17.5 0.3 Z"/></svg>
<div style="position:absolute;left:1037px;top:89.8px;font:normal normal 23.4px/30.4px 'Liberation Sans', sans-serif;color:#262626;white-space:pre;">NewItemView</div>
<div class="a" style="left:1216px;top:92px;width:2px;height:24px;background:#e6e6e6"></div>
<svg class="a" style="left:1265px;top:92px" width="26" height="26" viewBox="1265 92 26 26"><path d="M1275.9 96 L1271.9 115 M1282.9 96 L1279 115 M1270 101.5 H1286.6 M1268.8 109 H1285.4" stroke="#2f74f5" stroke-width="2.1" stroke-linecap="round"/></svg>
<div style="position:absolute;left:1301px;top:89.8px;font:italic normal 23.4px/30.4px 'Liberation Sans', sans-serif;color:#262626;white-space:pre;">When a to-do item is added with an im…s now uploaded to Supabase. (d8c0e21)</div>
<div class="a" style="left:2187px;top:92px;width:2px;height:24px;background:#e6e6e6"></div>
<svg style="position:absolute;left:2236px;top:94px" width="25" height="22" viewBox="0 0 28.5 25.2" preserveAspectRatio="none"><path fill="#ef7e52" d="M17.5 0.3 C23 3.2 27.2 9 26.2 14.4 L25.2 17.4 L28.2 24.3 C24.5 21.8 20.5 23.6 14.5 25 C8.5 25.6 3.2 21.5 0 16.6 C4.5 19.6 11 20.4 15.6 18 Q8 11.5 3.05 4.3 Q8.5 8.5 13.9 11.4 Q9.5 7 6.5 2.6 Q13 8 19.2 12.8 C20.8 8.8 20.2 4 17.5 0.3 Z"/></svg>
<div style="position:absolute;left:2273px;top:89.8px;font:normal normal 23.4px/30.4px 'Liberation Sans', sans-serif;color:#262626;white-space:pre;">TodoItem</div>
<div class="a" style="left:2410px;top:78px;width:328px;height:54px;background:#d7e6fb"></div>
<svg style="position:absolute;left:2457px;top:94px" width="25" height="22" viewBox="0 0 28.5 25.2" preserveAspectRatio="none"><path fill="#ef7e52" d="M17.5 0.3 C23 3.2 27.2 9 26.2 14.4 L25.2 17.4 L28.2 24.3 C24.5 21.8 20.5 23.6 14.5 25 C8.5 25.6 3.2 21.5 0 16.6 C4.5 19.6 11 20.4 15.6 18 Q8 11.5 3.05 4.3 Q8.5 8.5 13.9 11.4 Q9.5 7 6.5 2.6 Q13 8 19.2 12.8 C20.8 8.8 20.2 4 17.5 0.3 Z"/></svg>
<div style="position:absolute;left:2493px;top:89.8px;font:normal normal 23.4px/30.4px 'Liberation Sans', sans-serif;color:#2f72e3;white-space:pre;">TodoListViewModel</div>
<svg style="position:absolute;left:2785px;top:94px" width="25" height="22" viewBox="0 0 28.5 25.2" preserveAspectRatio="none"><path fill="#ef7e52" d="M17.5 0.3 C23 3.2 27.2 9 26.2 14.4 L25.2 17.4 L28.2 24.3 C24.5 21.8 20.5 23.6 14.5 25 C8.5 25.6 3.2 21.5 0 16.6 C4.5 19.6 11 20.4 15.6 18 Q8 11.5 3.05 4.3 Q8.5 8.5 13.9 11.4 Q9.5 7 6.5 2.6 Q13 8 19.2 12.8 C20.8 8.8 20.2 4 17.5 0.3 Z"/></svg>
<div class="a" style="left:2821px;top:78px;width:22px;height:54px;overflow:hidden"><div style="position:absolute;left:0;top:9px;font:normal 23.4px/35px 'Liberation Sans', sans-serif;color:#262626;white-space:pre">TodoListViewModel</div></div>
<div class="a" style="left:2836px;top:78px;width:8px;height:54px;background:linear-gradient(to right, rgba(0,0,0,0), rgba(0,0,0,0.12));"></div>
<div class="a" style="left:2843px;top:78px;width:181px;height:54px;background:#fff"></div>
<svg class="a" style="left:2858px;top:91px" width="28" height="28" viewBox="0 0 28 28"><path d="M4 9 H24 M18 3 L24 9 L18 15 M24 19 H4 M10 13 L4 19 L10 25" fill="none" stroke="#6e6e6e" stroke-width="2" stroke-linecap="round" stroke-linejoin="round"/></svg>
<svg class="a" style="left:2905px;top:91px" width="38" height="28" viewBox="0 0 38 28"><path d="M1 2 H27 M1 9 H37 M1 16 H37 M1 23 H37" stroke="#6e6e6e" stroke-width="2"/></svg>
<div class="a" style="left:2960px;top:92px;width:2px;height:24px;background:#e6e6e6"></div>
<svg class="a" style="left:2979px;top:91px" width="28" height="28" viewBox="0 0 28 28"><rect x="1.5" y="1.5" width="24" height="24" rx="3.5" fill="none" stroke="#6e6e6e" stroke-width="2.2"/><path d="M9 1.5 V25.5 M17.5 9 V18 M13 13.5 H22" stroke="#6e6e6e" stroke-width="2"/></svg>
<svg style="position:absolute;left:563px;top:148px" width="25" height="26" viewBox="0 0 29 30"><rect x="0.5" y="0.5" width="28" height="29" rx="6.5" fill="#1a7cf5"/><rect x="3" y="3" width="23" height="24" rx="4" fill="none" stroke="#8cc0ff" stroke-width="1.3"/><g stroke="#fff" stroke-width="1.8" stroke-linecap="round" fill="none"><path d="M15.8 6.5 L8.5 22"/><path d="M13 6.5 L21 21.5"/><path d="M6 18 L23 18"/></g></svg>
<div style="position:absolute;left:601px;top:145.8px;font:normal normal 23.4px/30.4px 'Liberation Sans', sans-serif;color:#262626;white-space:pre;">TodoList</div>
<svg class="a" style="left:699px;top:150px" width="9" height="23" viewBox="0 0 9 23"><path d="M1.8 2.5 L6.8 11.5 L1.8 20.5" fill="none" stroke="#7a7a7a" stroke-width="2.1" stroke-linecap="round" stroke-linejoin="round"/></svg>
<svg style="position:absolute;left:725px;top:151px" width="25" height="20" viewBox="0 0 29 24"><path fill="#868b90" d="M0 4 Q0 0 4 0 H9 Q11 0 12.5 1.5 L14 3 H25 Q29 3 29 7 V20 Q29 24 25 24 H4 Q0 24 0 20 Z"/><rect x="0" y="8" width="29" height="1.6" fill="#f5f5f5" opacity="0.9"/></svg>
<div style="position:absolute;left:763px;top:145.8px;font:normal normal 23.4px/30.4px 'Liberation Sans', sans-serif;color:#262626;white-space:pre;">TodoList</div>
<svg class="a" style="left:861px;top:150px" width="9" height="23" viewBox="0 0 9 23"><path d="M1.8 2.5 L6.8 11.5 L1.8 20.5" fill="none" stroke="#7a7a7a" stroke-width="2.1" stroke-linecap="round" stroke-linejoin="round"/></svg>
<svg style="position:absolute;left:887px;top:151px" width="25" height="20" viewBox="0 0 29 24"><path fill="#868b90" d="M0 4 Q0 0 4 0 H9 Q11 0 12.5 1.5 L14 3 H25 Q29 3 29 7 V20 Q29 24 25 24 H4 Q0 24 0 20 Z"/><rect x="0" y="8" width="29" height="1.6" fill="#f5f5f5" opacity="0.9"/></svg>
<div style="position:absolute;left:924px;top:145.8px;font:normal normal 23.4px/30.4px 'Liberation Sans', sans-serif;color:#262626;white-space:pre;">ViewModel</div>
<svg class="a" style="left:1049px;top:150px" width="9" height="23" viewBox="0 0 9 23"><path d="M1.8 2.5 L6.8 11.5 L1.8 20.5" fill="none" stroke="#7a7a7a" stroke-width="2.1" stroke-linecap="round" stroke-linejoin="round"/></svg>
<svg style="position:absolute;left:1076px;top:150px" width="25" height="22" viewBox="0 0 28.5 25.2" preserveAspectRatio="none"><path fill="#f06a3a" d="M17.5 0.3 C23 3.2 27.2 9 26.2 14.4 L25.2 17.4 L28.2 24.3 C24.5 21.8 20.5 23.6 14.5 25 C8.5 25.6 3.2 21.5 0 16.6 C4.5 19.6 11 20.4 15.6 18 Q8 11.5 3.05 4.3 Q8.5 8.5 13.9 11.4 Q9.5 7 6.5 2.6 Q13 8 19.2 12.8 C20.8 8.8 20.2 4 17.5 0.3 Z"/></svg>
<div style="position:absolute;left:1113px;top:145.8px;font:normal normal 23.4px/30.4px 'Liberation Sans', sans-serif;color:#262626;white-space:pre;">TodoListViewModel</div>
<svg class="a" style="left:1327px;top:150px" width="9" height="23" viewBox="0 0 9 23"><path d="M1.8 2.5 L6.8 11.5 L1.8 20.5" fill="none" stroke="#7a7a7a" stroke-width="2.1" stroke-linecap="round" stroke-linejoin="round"/></svg>
<div class="a" style="left:1352px;top:147px;width:27px;height:27px;border-radius:6px;background:#3b7cf0;color:#fff;font:bold 20px/27px 'Liberation Sans', sans-serif;text-align:center">M</div>
<div style="position:absolute;left:1390px;top:145.8px;font:normal normal 23.4px/30.4px 'Liberation Sans', sans-serif;color:#262626;white-space:pre;">downloadTodoItemImage(fromPath:)</div>
<svg class="a" style="left:2932px;top:151px" width="18" height="22" viewBox="0 0 18 22"><path d="M14 2 L4 11 L14 20" fill="none" stroke="#6e6e6e" stroke-width="2" stroke-linecap="round" stroke-linejoin="round"/></svg>
<svg class="a" style="left:2959px;top:150px" width="22" height="21" viewBox="0 0 24 22"><path d="M12 1.5 Q13 1.5 13.7 2.6 L23 19 Q23.5 21 21.5 21 H2.5 Q0.5 21 1 19 L10.3 2.6 Q11 1.5 12 1.5 Z" fill="#f7b500"/><path d="M12 7 V13.5" stroke="#fff" stroke-width="2.4" stroke-linecap="round"/><circle cx="12" cy="17" r="1.4" fill="#fff"/></svg>
<svg class="a" style="left:2990px;top:151px" width="18" height="22" viewBox="0 0 18 22"><path d="M4 2 L14 11 L4 20" fill="none" stroke="#6e6e6e" stroke-width="2" stroke-linecap="round" stroke-linejoin="round"/></svg>
<div class="a" style="left:546px;top:187px;width:2478px;height:2px;background:#e3e3e3;"></div>
<div class="a" style="left:546px;top:189px;width:2447px;height:1643px;overflow:hidden;background:#fff">
<div class="a" style="left:0;top:472px;width:2447px;height:44px;background:#ecf3fd"></div>
<div class="a" style="left:106px;top:0;width:14px;height:1643px;background:#e6e6e6"></div>
<div class="a" style="left:106px;top:297px;width:14px;height:86px;border-radius:7px;background:#d0d0d0"></div>
<div class="a" style="left:106px;top:473px;width:14px;height:832px;border-radius:7px;background:#d3d3d3;box-shadow:0 0 0 1px #f2f2f2"></div>
<div class="a" style="left:106px;top:605px;width:14px;height:480px;border-radius:7px;background:#bfbfbf;box-shadow:0 0 0 1px #ececec"></div>
<div class="a" style="left:106px;top:472px;width:14px;height:44px;background:rgba(120,150,200,0.10)"></div>
<div class="a" style="left:14px;top:472px;width:6px;height:876px;border-radius:5px;background:#a9c5f8;border:2px solid #2c70f6"></div>
<div class="a" style="left:0;top:33px;width:96px;height:44px;text-align:right;font:normal 32px/44px 'Liberation Sans', sans-serif;color:#a0a0a0;transform:scaleX(0.9);transform-origin:right center">28</div>
<div class="a" style="left:0;top:77px;width:96px;height:44px;text-align:right;font:normal 32px/44px 'Liberation Sans', sans-serif;color:#a0a0a0;transform:scaleX(0.9);transform-origin:right center">29</div>
<div class="a" style="left:145px;top:79px;height:44px;font:normal 32.93px/44px 'Liberation Mono', monospace;white-space:pre;color:#222"><span style="color:#222222;font-weight:normal">    </span><span style="color:#67737f;font-weight:normal">// </span><span style="color:#525d68;font-weight:bold">MARK: Functions</span></div>
<div class="a" style="left:0;top:121px;width:96px;height:44px;text-align:right;font:normal 32px/44px 'Liberation Sans', sans-serif;color:#a0a0a0;transform:scaleX(0.9);transform-origin:right center">30</div>
<div class="a" style="left:106px;top:120px;width:14px;height:44px;background:#8f8f8f"></div>
<svg class="a" style="left:109px;top:136px" width="9" height="12" viewBox="0 0 9 12"><path d="M2 1.5 L6.5 6 L2 10.5" fill="none" stroke="#fff" stroke-width="1.8" stroke-linecap="round" stroke-linejoin="round"/></svg>
<div class="a" style="left:145px;top:123px;height:44px;font:normal 32.93px/44px 'Liberation Mono', monospace;white-space:pre;color:#222"><span style="color:#222222;font-weight:normal">    </span><span style="color:#a0409e;font-weight:bold">func</span><span style="color:#222222;font-weight:normal"> </span><span style="color:#2f79b0;font-weight:normal">getTodos</span><span style="color:#222222;font-weight:normal">() </span><span style="color:#a0409e;font-weight:bold">async</span><span style="color:#222222;font-weight:normal"> </span><span style="color:#a0409e;font-weight:bold">throws</span><span style="color:#222222;font-weight:normal"> {</span><span style="display:inline-block;position:relative;width:68px;height:40px;vertical-align:-9px;"><span style="position:absolute;left:6px;top:0;width:62px;height:40px;border-radius:9px;background:#d9d9d9"></span><span style="position:absolute;left:14px;top:15px;width:10px;height:10px;border-radius:50%;background:#737373;box-shadow:17px 0 0 #737373, 34px 0 0 #737373"></span></span><span style="color:#222222;font-weight:normal">}</span></div>
<div class="a" style="left:0;top:165px;width:96px;height:44px;text-align:right;font:normal 32px/44px 'Liberation Sans', sans-serif;color:#a0a0a0;transform:scaleX(0.9);transform-origin:right center">53</div>
<div class="a" style="left:0;top:209px;width:96px;height:44px;text-align:right;font:normal 32px/44px 'Liberation Sans', sans-serif;color:#a0a0a0;transform:scaleX(0.9);transform-origin:right center">54</div>
<div class="a" style="left:106px;top:208px;width:14px;height:44px;background:#8f8f8f"></div>
<svg class="a" style="left:109px;top:224px" width="9" height="12" viewBox="0 0 9 12"><path d="M2 1.5 L6.5 6 L2 10.5" fill="none" stroke="#fff" stroke-width="1.8" stroke-linecap="round" stroke-linejoin="round"/></svg>
<div class="a" style="left:145px;top:211px;height:44px;font:normal 32.93px/44px 'Liberation Mono', monospace;white-space:pre;color:#222"><span style="color:#222222;font-weight:normal">    </span><span style="color:#a0409e;font-weight:bold">func</span><span style="color:#222222;font-weight:normal"> </span><span style="color:#2f79b0;font-weight:normal">createToDo</span><span style="color:#222222;font-weight:normal">(</span><span style="color:#2f79b0;font-weight:normal">withTitle</span><span style="color:#222222;font-weight:normal"> title: </span><span style="color:#4526a6;font-weight:normal">String</span><span style="color:#222222;font-weight:normal">, </span><span style="color:#2f79b0;font-weight:normal">andImage</span><span style="color:#222222;font-weight:normal"> providedImage: </span><span style="color:#2a5357;font-weight:normal">TodoItemImage</span><span style="color:#222222;font-weight:normal">?) {</span><span style="display:inline-block;position:relative;width:68px;height:40px;vertical-align:-9px;"><span style="position:absolute;left:6px;top:0;width:62px;height:40px;border-radius:9px;background:#d9d9d9"></span><span style="position:absolute;left:14px;top:15px;width:10px;height:10px;border-radius:50%;background:#737373;box-shadow:17px 0 0 #737373, 34px 0 0 #737373"></span></span><span style="color:#222222;font-weight:normal">}</span></div>
<div class="a" style="left:0;top:253px;width:96px;height:44px;text-align:right;font:normal 32px/44px 'Liberation Sans', sans-serif;color:#a0a0a0;transform:scaleX(0.9);transform-origin:right center">96</div>
<div class="a" style="left:0;top:297px;width:96px;height:44px;text-align:right;font:normal 32px/44px 'Liberation Sans', sans-serif;color:#a0a0a0;transform:scaleX(0.9);transform-origin:right center">97</div>
<div class="a" style="left:145px;top:299px;height:44px;font:normal 32.93px/44px 'Liberation Mono', monospace;white-space:pre;color:#222"><span style="color:#222222;font-weight:normal">    </span><span style="color:#67737f;font-weight:normal">// We mark the function as &quot;private&quot; meaning it can only be invoked from inside</span></div>
<div class="a" style="left:0;top:341px;width:96px;height:44px;text-align:right;font:normal 32px/44px 'Liberation Sans', sans-serif;color:#a0a0a0;transform:scaleX(0.9);transform-origin:right center">98</div>
<div class="a" style="left:145px;top:343px;height:44px;font:normal 32.93px/44px 'Liberation Mono', monospace;white-space:pre;color:#222"><span style="color:#222222;font-weight:normal">    </span><span style="color:#67737f;font-weight:normal">// the view model itself (it will not be accessible from the view layer)</span></div>
<div class="a" style="left:0;top:385px;width:96px;height:44px;text-align:right;font:normal 32px/44px 'Liberation Sans', sans-serif;color:#a0a0a0;transform:scaleX(0.9);transform-origin:right center">99</div>
<div class="a" style="left:106px;top:384px;width:14px;height:44px;background:#8f8f8f"></div>
<svg class="a" style="left:109px;top:400px" width="9" height="12" viewBox="0 0 9 12"><path d="M2 1.5 L6.5 6 L2 10.5" fill="none" stroke="#fff" stroke-width="1.8" stroke-linecap="round" stroke-linejoin="round"/></svg>
<div class="a" style="left:145px;top:387px;height:44px;font:normal 32.93px/44px 'Liberation Mono', monospace;white-space:pre;color:#222"><span style="color:#222222;font-weight:normal">    </span><span style="color:#a0409e;font-weight:bold">private</span><span style="color:#222222;font-weight:normal"> </span><span style="color:#a0409e;font-weight:bold">func</span><span style="color:#222222;font-weight:normal"> </span><span style="color:#2f79b0;font-weight:normal">uploadImage</span><span style="color:#222222;font-weight:normal">(</span><span style="color:#2f79b0;font-weight:normal">_</span><span style="color:#222222;font-weight:normal"> image: </span><span style="color:#2a5357;font-weight:normal">TodoItemImage</span><span style="color:#222222;font-weight:normal">?) </span><span style="color:#a0409e;font-weight:bold">async</span><span style="color:#222222;font-weight:normal"> </span><span style="color:#a0409e;font-weight:bold">throws</span><span style="color:#222222;font-weight:normal"> -&gt; </span><span style="color:#4526a6;font-weight:normal">String</span><span style="color:#222222;font-weight:normal">? {</span><span style="display:inline-block;position:relative;width:68px;height:40px;vertical-align:-9px;"><span style="position:absolute;left:6px;top:0;width:62px;height:40px;border-radius:9px;background:#d9d9d9"></span><span style="position:absolute;left:14px;top:15px;width:10px;height:10px;border-radius:50%;background:#737373;box-shadow:17px 0 0 #737373, 34px 0 0 #737373"></span></span><span style="color:#222222;font-weight:normal">}</span></div>
<div class="a" style="left:0;top:429px;width:96px;height:44px;text-align:right;font:normal 32px/44px 'Liberation Sans', sans-serif;color:#a0a0a0;transform:scaleX(0.9);transform-origin:right center">121</div>
<div class="a" style="left:0;top:473px;width:96px;height:44px;text-align:right;font:normal 32px/44px 'Liberation Sans', sans-serif;color:#1a1a1a;transform:scaleX(0.9);transform-origin:right center">122</div>
<div class="a" style="left:145px;top:475px;height:44px;font:normal 32.93px/44px 'Liberation Mono', monospace;white-space:pre;color:#222"><span style="color:#222222;font-weight:normal">    </span><span style="color:#a0409e;font-weight:bold">func</span><span style="color:#222222;font-weight:normal"> </span><span style="color:#2f79b0;font-weight:normal">downloadTodoItemImage</span><span style="color:#222222;font-weight:normal">(</span><span style="color:#2f79b0;font-weight:normal">fromPath</span><span style="color:#222222;font-weight:normal"> path: </span><span style="color:#4526a6;font-weight:normal">String</span><span style="color:#222222;font-weight:normal">) </span><span style="color:#a0409e;font-weight:bold">async</span><span style="color:#222222;font-weight:normal"> </span><span style="color:#a0409e;font-weight:bold">throws</span><span style="color:#222222;font-weight:normal"> -&gt; </span><span style="color:#2a5357;font-weight:normal">TodoItemImage</span><span style="color:#222222;font-weight:normal">? {</span></div>
<div class="a" style="left:0;top:517px;width:96px;height:44px;text-align:right;font:normal 32px/44px 'Liberation Sans', sans-serif;color:#a0a0a0;transform:scaleX(0.9);transform-origin:right center">123</div>
<div class="a" style="left:0;top:561px;width:96px;height:44px;text-align:right;font:normal 32px/44px 'Liberation Sans', sans-serif;color:#a0a0a0;transform:scaleX(0.9);transform-origin:right center">124</div>
<div class="a" style="left:145px;top:563px;height:44px;font:normal 32.93px/44px 'Liberation Mono', monospace;white-space:pre;color:#222"><span style="color:#222222;font-weight:normal">        </span><span style="color:#67737f;font-weight:normal">// Attempt to download an image from the provided path</span></div>
<div class="a" style="left:0;top:605px;width:96px;height:44px;text-align:right;font:normal 32px/44px 'Liberation Sans', sans-serif;color:#a0a0a0;transform:scaleX(0.9);transform-origin:right center">125</div>
<div class="a" style="left:145px;top:607px;height:44px;font:normal 32.93px/44px 'Liberation Mono', monospace;white-space:pre;color:#222"><span style="color:#222222;font-weight:normal">        </span><span style="color:#a0409e;font-weight:bold">do</span><span style="color:#222222;font-weight:normal"> {</span></div>
<div class="a" style="left:0;top:649px;width:96px;height:44px;text-align:right;font:normal 32px/44px 'Liberation Sans', sans-serif;color:#a0a0a0;transform:scaleX(0.9);transform-origin:right center">126</div>
<div class="a" style="left:145px;top:651px;height:44px;font:normal 32.93px/44px 'Liberation Mono', monospace;white-space:pre;color:#222"><span style="color:#222222;font-weight:normal">            </span><span style="color:#a0409e;font-weight:bold">let</span><span style="color:#222222;font-weight:normal"> data = </span><span style="color:#a0409e;font-weight:bold">try</span><span style="color:#222222;font-weight:normal"> </span><span style="color:#a0409e;font-weight:bold">await</span><span style="color:#222222;font-weight:normal"> </span><span style="color:#427b82;font-weight:normal">supabase</span></div>
<div class="a" style="left:0;top:693px;width:96px;height:44px;text-align:right;font:normal 32px/44px 'Liberation Sans', sans-serif;color:#a0a0a0;transform:scaleX(0.9);transform-origin:right center">127</div>
<div class="a" style="left:145px;top:695px;height:44px;font:normal 32.93px/44px 'Liberation Mono', monospace;white-space:pre;color:#222"><span style="color:#222222;font-weight:normal">                .</span><span style="color:#7545ad;font-weight:normal">storage</span></div>
<div class="a" style="left:0;top:737px;width:96px;height:44px;text-align:right;font:normal 32px/44px 'Liberation Sans', sans-serif;color:#a0a0a0;transform:scaleX(0.9);transform-origin:right center">128</div>
<div class="a" style="left:145px;top:739px;height:44px;font:normal 32.93px/44px 'Liberation Mono', monospace;white-space:pre;color:#222"><span style="color:#222222;font-weight:normal">                .</span><span style="color:#427b82;font-weight:normal">from</span><span style="color:#222222;font-weight:normal">(</span><span style="color:#c23a26;font-weight:normal">&quot;todos_images&quot;</span><span style="color:#222222;font-weight:normal">)</span></div>
<div class="a" style="left:0;top:781px;width:96px;height:44px;text-align:right;font:normal 32px/44px 'Liberation Sans', sans-serif;color:#a0a0a0;transform:scaleX(0.9);transform-origin:right center">129</div>
<div class="a" style="left:145px;top:783px;height:44px;font:normal 32.93px/44px 'Liberation Mono', monospace;white-space:pre;color:#222"><span style="color:#222222;font-weight:normal">                .</span><span style="color:#427b82;font-weight:normal">download</span><span style="color:#222222;font-weight:normal">(</span><span style="color:#427b82;font-weight:normal">path</span><span style="color:#222222;font-weight:normal">: path)</span></div>
<div class="a" style="left:0;top:825px;width:96px;height:44px;text-align:right;font:normal 32px/44px 'Liberation Sans', sans-serif;color:#a0a0a0;transform:scaleX(0.9);transform-origin:right center">130</div>
<div class="a" style="left:0;top:869px;width:96px;height:44px;text-align:right;font:normal 32px/44px 'Liberation Sans', sans-serif;color:#a0a0a0;transform:scaleX(0.9);transform-origin:right center">131</div>
<div class="a" style="left:145px;top:871px;height:44px;font:normal 32.93px/44px 'Liberation Mono', monospace;white-space:pre;color:#222"><span style="color:#222222;font-weight:normal">            </span><span style="color:#a0409e;font-weight:bold">return</span><span style="color:#222222;font-weight:normal"> </span><span style="color:#2a5357;font-weight:normal">TodoItemImage</span><span style="color:#222222;font-weight:normal">(</span><span style="color:#427b82;font-weight:normal">rawImageData</span><span style="color:#222222;font-weight:normal">: data)</span></div>
<div class="a" style="left:0;top:913px;width:96px;height:44px;text-align:right;font:normal 32px/44px 'Liberation Sans', sans-serif;color:#a0a0a0;transform:scaleX(0.9);transform-origin:right center">132</div>
<div class="a" style="left:0;top:957px;width:96px;height:44px;text-align:right;font:normal 32px/44px 'Liberation Sans', sans-serif;color:#a0a0a0;transform:scaleX(0.9);transform-origin:right center">133</div>
<div class="a" style="left:145px;top:959px;height:44px;font:normal 32.93px/44px 'Liberation Mono', monospace;white-space:pre;color:#222"><span style="color:#222222;font-weight:normal">        } </span><span style="color:#a0409e;font-weight:bold">catch</span><span style="color:#222222;font-weight:normal"> {</span></div>
<div class="a" style="left:0;top:1001px;width:96px;height:44px;text-align:right;font:normal 32px/44px 'Liberation Sans', sans-serif;color:#a0a0a0;transform:scaleX(0.9);transform-origin:right center">134</div>
<div class="a" style="left:145px;top:1003px;height:44px;font:normal 32.93px/44px 'Liberation Mono', monospace;white-space:pre;color:#222"><span style="color:#222222;font-weight:normal">            </span><span style="color:#7545ad;font-weight:normal">debugPrint</span><span style="color:#222222;font-weight:normal">(error)</span></div>
<div class="a" style="left:0;top:1045px;width:96px;height:44px;text-align:right;font:normal 32px/44px 'Liberation Sans', sans-serif;color:#a0a0a0;transform:scaleX(0.9);transform-origin:right center">135</div>
<div class="a" style="left:145px;top:1047px;height:44px;font:normal 32.93px/44px 'Liberation Mono', monospace;white-space:pre;color:#222"><span style="color:#222222;font-weight:normal">        }</span></div>
<div class="a" style="left:0;top:1089px;width:96px;height:44px;text-align:right;font:normal 32px/44px 'Liberation Sans', sans-serif;color:#a0a0a0;transform:scaleX(0.9);transform-origin:right center">136</div>
<div class="a" style="left:0;top:1133px;width:96px;height:44px;text-align:right;font:normal 32px/44px 'Liberation Sans', sans-serif;color:#a0a0a0;transform:scaleX(0.9);transform-origin:right center">137</div>
<div class="a" style="left:145px;top:1135px;height:44px;font:normal 32.93px/44px 'Liberation Mono', monospace;white-space:pre;color:#222"><span style="color:#222222;font-weight:normal">        </span><span style="color:#67737f;font-weight:normal">// If we landed here, something went wrong, so return nil</span></div>
<div class="a" style="left:0;top:1177px;width:96px;height:44px;text-align:right;font:normal 32px/44px 'Liberation Sans', sans-serif;color:#a0a0a0;transform:scaleX(0.9);transform-origin:right center">138</div>
<div class="a" style="left:145px;top:1179px;height:44px;font:normal 32.93px/44px 'Liberation Mono', monospace;white-space:pre;color:#222"><span style="color:#222222;font-weight:normal">        </span><span style="color:#a0409e;font-weight:bold">return</span><span style="color:#222222;font-weight:normal"> </span><span style="color:#a0409e;font-weight:bold">nil</span></div>
<div class="a" style="left:0;top:1221px;width:96px;height:44px;text-align:right;font:normal 32px/44px 'Liberation Sans', sans-serif;color:#a0a0a0;transform:scaleX(0.9);transform-origin:right center">139</div>
<div class="a" style="left:0;top:1265px;width:96px;height:44px;text-align:right;font:normal 32px/44px 'Liberation Sans', sans-serif;color:#a0a0a0;transform:scaleX(0.9);transform-origin:right center">140</div>
<div class="a" style="left:145px;top:1267px;height:44px;font:normal 32.93px/44px 'Liberation Mono', monospace;white-space:pre;color:#222"><span style="color:#222222;font-weight:normal">    }</span></div>
<div class="a" style="left:0;top:1309px;width:96px;height:44px;text-align:right;font:normal 32px/44px 'Liberation Sans', sans-serif;color:#a0a0a0;transform:scaleX(0.9);transform-origin:right center">141</div>
<div class="a" style="left:0;top:1353px;width:96px;height:44px;text-align:right;font:normal 32px/44px 'Liberation Sans', sans-serif;color:#a0a0a0;transform:scaleX(0.9);transform-origin:right center">142</div>
<div class="a" style="left:106px;top:1352px;width:14px;height:44px;background:#8f8f8f"></div>
<svg class="a" style="left:109px;top:1368px" width="9" height="12" viewBox="0 0 9 12"><path d="M2 1.5 L6.5 6 L2 10.5" fill="none" stroke="#fff" stroke-width="1.8" stroke-linecap="round" stroke-linejoin="round"/></svg>
<div class="a" style="left:145px;top:1355px;height:44px;font:normal 32.93px/44px 'Liberation Mono', monospace;white-space:pre;color:#222"><span style="color:#222222;font-weight:normal">    </span><span style="color:#a0409e;font-weight:bold">func</span><span style="color:#222222;font-weight:normal"> </span><span style="color:#2f79b0;font-weight:normal">delete</span><span style="color:#222222;font-weight:normal">(</span><span style="color:#2f79b0;font-weight:normal">_</span><span style="color:#222222;font-weight:normal"> todo: </span><span style="color:#2a5357;font-weight:normal">TodoItem</span><span style="color:#222222;font-weight:normal">) {</span><span style="display:inline-block;position:relative;width:68px;height:40px;vertical-align:-9px;"><span style="position:absolute;left:6px;top:0;width:62px;height:40px;border-radius:9px;background:#d9d9d9"></span><span style="position:absolute;left:14px;top:15px;width:10px;height:10px;border-radius:50%;background:#737373;box-shadow:17px 0 0 #737373, 34px 0 0 #737373"></span></span><span style="color:#222222;font-weight:normal">}</span></div>
<div class="a" style="left:0;top:1397px;width:96px;height:44px;text-align:right;font:normal 32px/44px 'Liberation Sans', sans-serif;color:#a0a0a0;transform:scaleX(0.9);transform-origin:right center">167</div>
<div class="a" style="left:0;top:1441px;width:96px;height:44px;text-align:right;font:normal 32px/44px 'Liberation Sans', sans-serif;color:#a0a0a0;transform:scaleX(0.9);transform-origin:right center">168</div>
<div class="a" style="left:106px;top:1440px;width:14px;height:44px;background:#8f8f8f"></div>
<svg class="a" style="left:109px;top:1456px" width="9" height="12" viewBox="0 0 9 12"><path d="M2 1.5 L6.5 6 L2 10.5" fill="none" stroke="#fff" stroke-width="1.8" stroke-linecap="round" stroke-linejoin="round"/></svg>
<div class="a" style="left:145px;top:1443px;height:44px;font:normal 32.93px/44px 'Liberation Mono', monospace;white-space:pre;color:#222"><span style="color:#222222;font-weight:normal">    </span><span style="color:#a0409e;font-weight:bold">func</span><span style="color:#222222;font-weight:normal"> </span><span style="color:#2f79b0;font-weight:normal">update</span><span style="color:#222222;font-weight:normal">(</span><span style="color:#2f79b0;font-weight:normal">todo</span><span style="color:#222222;font-weight:normal"> updatedTodo: </span><span style="color:#2a5357;font-weight:normal">TodoItem</span><span style="color:#222222;font-weight:normal">) {</span><span style="display:inline-block;position:relative;width:68px;height:40px;vertical-align:-9px;"><span style="position:absolute;left:6px;top:0;width:62px;height:40px;border-radius:9px;background:#d9d9d9"></span><span style="position:absolute;left:14px;top:15px;width:10px;height:10px;border-radius:50%;background:#737373;box-shadow:17px 0 0 #737373, 34px 0 0 #737373"></span></span><span style="color:#222222;font-weight:normal">}</span></div>
<div class="a" style="left:0;top:1485px;width:96px;height:44px;text-align:right;font:normal 32px/44px 'Liberation Sans', sans-serif;color:#a0a0a0;transform:scaleX(0.9);transform-origin:right center">189</div>
<div class="a" style="left:0;top:1529px;width:96px;height:44px;text-align:right;font:normal 32px/44px 'Liberation Sans', sans-serif;color:#a0a0a0;transform:scaleX(0.9);transform-origin:right center">190</div>
<div class="a" style="left:106px;top:1528px;width:14px;height:44px;background:#8f8f8f"></div>
<svg class="a" style="left:109px;top:1544px" width="9" height="12" viewBox="0 0 9 12"><path d="M2 1.5 L6.5 6 L2 10.5" fill="none" stroke="#fff" stroke-width="1.8" stroke-linecap="round" stroke-linejoin="round"/></svg>
<div class="a" style="left:145px;top:1531px;height:44px;font:normal 32.93px/44px 'Liberation Mono', monospace;white-space:pre;color:#222"><span style="color:#222222;font-weight:normal">    </span><span style="color:#a0409e;font-weight:bold">func</span><span style="color:#222222;font-weight:normal"> </span><span style="color:#2f79b0;font-weight:normal">filterTodos</span><span style="color:#222222;font-weight:normal">(</span><span style="color:#2f79b0;font-weight:normal">on</span><span style="color:#222222;font-weight:normal"> searchTerm: </span><span style="color:#4526a6;font-weight:normal">String</span><span style="color:#222222;font-weight:normal">) </span><span style="color:#a0409e;font-weight:bold">async</span><span style="color:#222222;font-weight:normal"> </span><span style="color:#a0409e;font-weight:bold">throws</span><span style="color:#222222;font-weight:normal"> {</span><span style="display:inline-block;position:relative;width:68px;height:40px;vertical-align:-9px;"><span style="position:absolute;left:6px;top:0;width:62px;height:40px;border-radius:9px;background:#d9d9d9"></span><span style="position:absolute;left:14px;top:15px;width:10px;height:10px;border-radius:50%;background:#737373;box-shadow:17px 0 0 #737373, 34px 0 0 #737373"></span></span><span style="color:#222222;font-weight:normal">}</span></div>
<div class="a" style="left:0;top:1573px;width:96px;height:44px;text-align:right;font:normal 32px/44px 'Liberation Sans', sans-serif;color:#a0a0a0;transform:scaleX(0.9);transform-origin:right center">220</div>
<div class="a" style="left:0;top:1617px;width:96px;height:44px;text-align:right;font:normal 32px/44px 'Liberation Sans', sans-serif;color:#a0a0a0;transform:scaleX(0.9);transform-origin:right center">221</div>
<div class="a" style="left:145px;top:1619px;height:44px;font:normal 32.93px/44px 'Liberation Mono', monospace;white-space:pre;color:#222"><span style="color:#222222;font-weight:normal">}</span></div>
</div>
<div class="a" style="left:546px;top:189px;width:2447px;height:44px;background:#f2f2f2;border-bottom:2px solid #dcdcdc;box-shadow:0 4px 12px rgba(0,0,0,0.06)"></div>
<div class="a" style="left:546px;top:190px;width:96px;height:44px;text-align:right;font:normal 32px/44px 'Liberation Sans', sans-serif;color:#a0a0a0;transform:scaleX(0.9);transform-origin:right center">12</div>
<div class="a" style="left:691px;top:194px;height:44px;font:normal 32.93px/44px 'Liberation Mono', monospace;white-space:pre"><span style="color:#a0409e;font-weight:bold">class</span> <span style="color:#205e86">TodoListViewModel</span> <span style="color:#222">{</span></div>
<div class="a" style="left:2993px;top:189px;width:31px;height:1643px;background:#f9f9f9;border-left:2px solid #e6e6e6"></div>
<div class="a" style="left:3002px;top:679px;width:16px;height:778px;border-radius:8px;background:#7b7b7b"></div>
<div class="a" style="left:546px;top:1832px;width:2478px;height:2px;background:#e3e3e3"></div>
<div class="a" style="left:546px;top:1834px;width:2478px;height:54px;background:#fff"></div>
<svg class="a" style="left:568px;top:1851px" width="32" height="20" viewBox="0 0 32 20"><path d="M3 0.5 H22 Q24 0.5 25.5 2.5 L30.5 9 Q31.2 10 30.5 11 L25.5 17.5 Q24 19.5 22 19.5 H3 Q0.5 19.5 0.5 17 V3 Q0.5 0.5 3 0.5 Z" fill="#3478f6"/></svg>
<div class="a" style="left:614px;top:1849px;width:2px;height:24px;background:#e6e6e6"></div>
<svg class="a" style="left:636px;top:1848px" width="20" height="28" viewBox="0 0 20 28"><rect x="1.2" y="1.2" width="5" height="25.6" rx="2" fill="none" stroke="#6e6e6e" stroke-width="2"/><rect x="13.8" y="1.2" width="5" height="25.6" rx="2" fill="none" stroke="#6e6e6e" stroke-width="2"/></svg>
<svg class="a" style="left:692px;top:1848px" width="28" height="28" viewBox="0 0 28 28"><path d="M1 15 L12 4 L20 12 M15 14 L24 14 M20 10 L24 14 L20 18 M6 20 V26 H20 V20 Z" fill="none" stroke="#b8b8b8" stroke-width="2" stroke-linejoin="round" stroke-linecap="round"/></svg>
<svg class="a" style="left:756px;top:1848px" width="20" height="28" viewBox="0 0 20 28"><path d="M10 1 V17 M4 11 L10 17 L16 11 M1 21 H19 V26 H1 Z" fill="none" stroke="#b8b8b8" stroke-width="2" stroke-linejoin="round" stroke-linecap="round"/></svg>
<svg class="a" style="left:816px;top:1848px" width="20" height="28" viewBox="0 0 20 28"><path d="M10 17 V1 M4 7 L10 1 L16 7 M1 21 H19 V26 H1 Z" fill="none" stroke="#b8b8b8" stroke-width="2" stroke-linejoin="round" stroke-linecap="round"/></svg>
<div class="a" style="left:856px;top:1849px;width:2px;height:24px;background:#e6e6e6"></div>
<svg class="a" style="left:876px;top:1847px" width="24" height="28" viewBox="0 0 24 28"><path d="M9 6 L22 3 V22 L9 26 Z M5 8 L18 4.5 M5 8 V24 M1.5 10 L14 6.5 M1.5 10 V22" fill="none" stroke="#6e6e6e" stroke-width="2" stroke-linejoin="round"/></svg>
<svg class="a" style="left:934px;top:1847px" width="28" height="28" viewBox="0 0 28 28"><circle cx="5.5" cy="5" r="4" fill="none" stroke="#6e6e6e" stroke-width="2"/><circle cx="5.5" cy="23" r="4" fill="none" stroke="#6e6e6e" stroke-width="2"/><circle cx="22" cy="14" r="4" fill="none" stroke="#6e6e6e" stroke-width="2"/><path d="M9 7 L18.5 12 M9 21 L18.5 16" stroke="#6e6e6e" stroke-width="2"/></svg>
<svg class="a" style="left:996px;top:1847px" width="24" height="28" viewBox="0 0 24 28"><rect x="1" y="1" width="22" height="11" rx="5.5" fill="none" stroke="#6e6e6e" stroke-width="2"/><circle cx="7" cy="6.5" r="3" fill="#6e6e6e"/><rect x="1" y="16" width="22" height="11" rx="5.5" fill="none" stroke="#6e6e6e" stroke-width="2"/><circle cx="17" cy="21.5" r="3" fill="#6e6e6e"/></svg>
<svg class="a" style="left:1055px;top:1847px" width="27" height="27" viewBox="0 0 27 27"><path d="M1.5 11 L25.5 1.5 L16 25.5 L13.5 13.5 Z" fill="none" stroke="#6e6e6e" stroke-width="2" stroke-linejoin="round"/></svg>
<div class="a" style="left:1098px;top:1849px;width:2px;height:24px;background:#e6e6e6"></div>
<svg class="a" style="left:1118px;top:1849px" width="23" height="23" viewBox="0 0 22 22"><rect x="0" y="0" width="22" height="22" rx="4" fill="#7a7a7a"/><g stroke="#fff" stroke-width="1.5" stroke-linecap="round" fill="none"><path d="M11.8 4.5 L5.5 17.5"/><path d="M9.6 4.5 L17 17"/><path d="M4 14 H18.5"/></g></svg>
<div style="position:absolute;left:1155px;top:1846.8px;font:normal normal 23.4px/30.4px 'Liberation Sans', sans-serif;color:#262626;white-space:pre;">TodoList</div>
<div style="position:absolute;left:2747px;top:1845.4px;font:normal normal 24px/31.2px 'Liberation Sans', sans-serif;color:#8a8a8a;white-space:pre;">Line: 122  Col: 14</div>
<div class="a" style="left:2955px;top:1849px;width:2px;height:26px;background:#e8e8e8"></div>
<svg class="a" style="left:2972px;top:1848px" width="27" height="26" viewBox="0 0 27 26"><rect x="1.2" y="1.2" width="24.6" height="23.6" rx="4" fill="none" stroke="#6e6e6e" stroke-width="2"/><rect x="5" y="16" width="17" height="5" rx="1.5" fill="#6e6e6e"/></svg>
</div><div style="position:absolute;left:0;top:0;width:14px;height:1px;background:#000"></div></body></html>
